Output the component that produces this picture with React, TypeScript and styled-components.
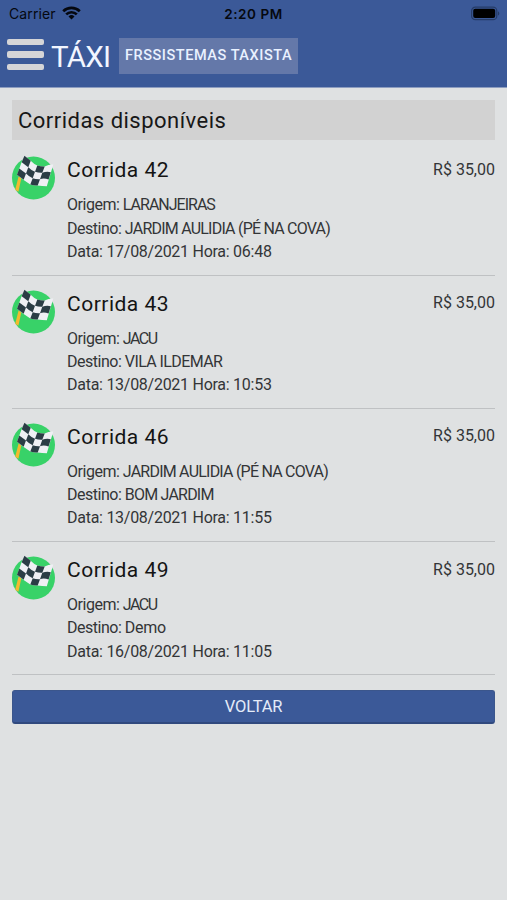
import React from 'react';
import styled, { createGlobalStyle } from 'styled-components';

const GlobalStyle = createGlobalStyle`
  * { box-sizing: border-box; }
  body {
    margin: 0;
    background: #dfe1e2;
    font-family: Roboto, "Noto Sans", sans-serif;
    color: #333537;
  }
`;

const Screen = styled.div`
  min-height: 900px;
  background: #dfe1e2;
`;

const Header = styled.header`
  height: 88px;
  background: #3b5998;
  border-bottom: 1px solid #8d9dc0;
`;

const StatusBar = styled.div`
  display: grid;
  grid-template-columns: 1fr auto 1fr;
  align-items: center;
  height: 28px;
  padding: 0 7px 0 9px;
  font: 400 14px/28px Inter, sans-serif;
  color: #05080f;
`;

const Carrier = styled.div`
  display: flex;
  align-items: center;
  gap: 6px;
  letter-spacing: 0.1px;

  svg { margin-top: -2px; }
`;

const Clock = styled.div`
  font-size: 13.5px;
  font-weight: 600;
  letter-spacing: 0.55px;
  margin-right: 2px;
`;

const Battery = styled.svg`
  justify-self: end;
  margin-top: -2px;
`;

const NavBar = styled.div`
  display: flex;
  align-items: center;
  height: 56px;
  padding-left: 7px;
`;

const MenuButton = styled.button`
  display: grid;
  gap: 6px;
  width: 37px;
  padding: 0;
  border: 0;
  background: none;
  margin-top: -3px;
`;

const MenuBar = styled.span`
  height: 6.6px;
  border-radius: 2px;
  background: #d5d5d7;
`;

const Brand = styled.div`
  width: 60px;
  margin: 1px 8px 0 7px;
  font-size: 29.5px;
  font-weight: 400;
  letter-spacing: -0.7px;
  line-height: 36px;
  color: #f2f6ff;
  white-space: nowrap;
`;

const UserTag = styled.div`
  width: 179px;
  height: 36px;
  background: #6478a9;
  color: #e9f1ff;
  font-size: 14.5px;
  font-weight: 500;
  letter-spacing: 0.55px;
  line-height: 36px;
  padding-left: 6px;
  white-space: nowrap;
`;

const Content = styled.main`
  padding: 12px 12px 0;
`;

const PageTitle = styled.h1`
  height: 40px;
  margin: 0;
  padding-left: 6px;
  background: #d2d2d2;
  color: #171717;
  font-size: 22px;
  font-weight: 400;
  letter-spacing: 0.48px;
  line-height: 41px;
`;

const RideList = styled.ul`
  list-style: none;
  margin: 0;
  padding: 2.4px 0 0;
`;

const RideItem = styled.li`
  display: grid;
  grid-template-columns: 55px 1fr auto;
  height: 133.2px;
  padding-top: 14px;
  border-bottom: 1px solid #bfc1c3;
`;

const FlagBadge = styled.svg`
  margin-top: -1px;
`;

const RideTitle = styled.h2`
  margin: 1px 0 9px;
  color: #141414;
  font-size: 21px;
  font-weight: 400;
  letter-spacing: 0.5px;
  line-height: 27px;
`;

const RideLine = styled.div`
  font-size: 16px;
  line-height: 23.3px;
  letter-spacing: -0.27px;
  white-space: nowrap;
`;

const Label = styled.span`
  letter-spacing: -0.48px;
`;

const Place = styled.span<{ $spacing: number }>`
  letter-spacing: ${({ $spacing }) => $spacing}px;
`;

const Price = styled.div`
  margin-top: 0.6px;
  font-size: 16px;
  line-height: 26px;
`;

const BackButton = styled.button`
  display: block;
  width: 100%;
  height: 34px;
  margin-top: 15px;
  padding: 0;
  border: 1px solid #3b568c;
  border-bottom: 2px solid #30497e;
  border-radius: 3px;
  background: #3b5998;
  color: #e4ebf9;
  font: 400 16.5px/32px Roboto, sans-serif;
  letter-spacing: -0.2px;
`;

const JARDIM = { name: 'JARDIM AULIDIA (PÉ NA COVA)', spacing: -0.78 };
const JACU = { name: 'JACU', spacing: -1.5 };

const rides = [
  { id: 42, from: { name: 'LARANJEIRAS', spacing: -1 }, to: JARDIM, date: '17/08/2021', time: '06:48' },
  { id: 43, from: JACU, to: { name: 'VILA ILDEMAR', spacing: -0.6 }, date: '13/08/2021', time: '10:53' },
  { id: 46, from: JARDIM, to: { name: 'BOM JARDIM', spacing: -0.8 }, date: '13/08/2021', time: '11:55' },
  { id: 49, from: JACU, to: { name: 'Demo', spacing: -0.3 }, date: '16/08/2021', time: '11:05' },
];

const WifiIcon = () => (
  <svg width="19" height="14" viewBox="0 0 19 14" fill="none" stroke="#05080f" strokeWidth="2.7">
    <path d="M1.2 5.2a12 12 0 0 1 16.6 0M4.2 8.4a7.6 7.6 0 0 1 10.6 0" />
    <path d="M9.5 13.4 6.5 10.4a4.3 4.3 0 0 1 6 0Z" fill="#05080f" stroke="none" />
  </svg>
);

const BatteryIcon = () => (
  <Battery width="30" height="15" viewBox="0 0 30 15">
    <rect x="1.6" y="1.1" width="25.2" height="12.6" rx="3.8" fill="none" stroke="#263c68" strokeWidth="1.2" />
    <rect x="3.2" y="2.7" width="22" height="9.4" rx="2" fill="#000" />
    <path d="M28 5.2c1.8.8 1.8 3.5 0 4.3Z" fill="#263c68" />
  </Battery>
);

const FlagIcon = () => (
  <FlagBadge width="43" height="46" viewBox="0 0 43 46">
    <circle cx="21.5" cy="23" r="21.5" fill="#38d268" />
    <path d="M6.6 21.5 9.3 23.5 6.4 36.8 3.2 34.8Z" fill="#f4b92e" />
    <path d="M12 .8 18.7 5.8Q22 9.3 25.3 10.5 29 11.8 32.7 11.5 37 9.3 41.3 9.6L34.8 31.3Q30 31.2 25.7 30.5 22 30.8 18.3 29.5 11.7 25.5 5 19.8Z" fill="#eff0f4" />
    <g fill="#2b3d45">
      <path d="M12.4.8 18.7 5.8 16.3 12.2 9.7 7.2Z" />
      <path d="M25.3 10.5Q29 11.7 32.7 11.5L30.3 17.8Q26.5 18 23 16.8Z" />
      <path d="M16.3 12.2Q19.5 15.5 23 16.8L20.7 23.2Q17 21.7 14 18.5Z" />
      <path d="M30.3 17.8Q34.4 16.2 38.8 17.2L36.6 24.5Q32 22.8 28 24.2Z" />
      <path d="M7.3 13.5 14 18.5 11.7 24.8 5 19.8Z" />
      <path d="M20.7 23.2Q24.2 24.5 28 24.2L25.7 30.5Q21.9 30.8 18.3 29.5Z" />
    </g>
  </FlagBadge>
);

export default function App() {
  return (
    <Screen>
      <GlobalStyle />
      <Header>
        <StatusBar>
          <Carrier>Carrier <WifiIcon /></Carrier>
          <Clock>2:20 PM</Clock>
          <BatteryIcon />
        </StatusBar>
        <NavBar>
          <MenuButton aria-label="Menu"><MenuBar /><MenuBar /><MenuBar /></MenuButton>
          <Brand>TÁXI</Brand>
          <UserTag>FRSSISTEMAS TAXISTA</UserTag>
        </NavBar>
      </Header>
      <Content>
        <PageTitle>Corridas disponíveis</PageTitle>
        <RideList>
          {rides.map((ride) => (
            <RideItem key={ride.id}>
              <FlagIcon />
              <div>
                <RideTitle>Corrida {ride.id}</RideTitle>
                <RideLine><Label>Origem: </Label><Place $spacing={ride.from.spacing}>{ride.from.name}</Place></RideLine>
                <RideLine><Label>Destino: </Label><Place $spacing={ride.to.spacing}>{ride.to.name}</Place></RideLine>
                <RideLine>Data: {ride.date} Hora: {ride.time}</RideLine>
              </div>
              <Price>R$ 35,00</Price>
            </RideItem>
          ))}
        </RideList>
        <BackButton>VOLTAR</BackButton>
      </Content>
    </Screen>
  );
}
